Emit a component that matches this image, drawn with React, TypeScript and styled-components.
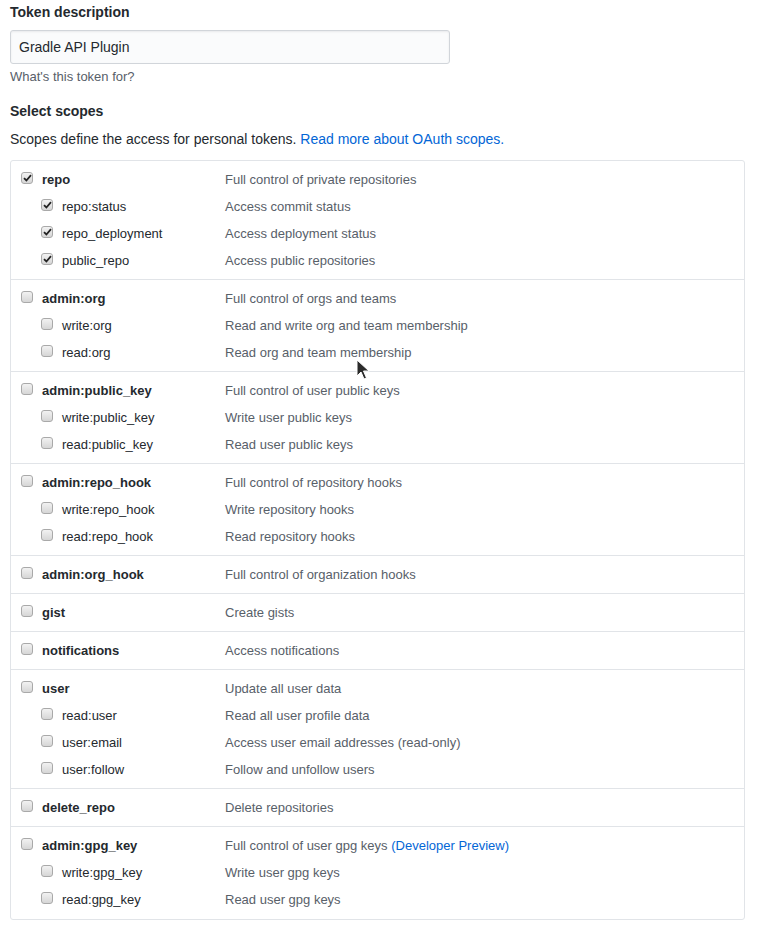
import React from "react";
import styled, { createGlobalStyle } from "styled-components";

const Global = createGlobalStyle`
  html, body { margin: 0; padding: 0; background: #fff; }
  body {
    font-family: "Liberation Sans", Arial, Helvetica, sans-serif;
    color: #24292e;
    font-size: 14px;
    line-height: 1.5;
  }
`;

const Page = styled.div`
  position: relative;
  padding: 2px 20px 10px 10px;
`;

const Label = styled.div`
  font-weight: bold;
  font-size: 14px;
  line-height: 21px;
`;

const Input = styled.input`
  display: block;
  box-sizing: border-box;
  width: 440px;
  height: 34px;
  margin-top: 7px;
  padding: 6px 8px;
  font-family: inherit;
  font-size: 14px;
  color: #24292e;
  background: #fafbfc;
  border: 1px solid #d1d5da;
  border-radius: 3px;
  box-shadow: inset 0 1px 2px rgba(27, 31, 35, 0.075);
  outline: none;
`;

const Note = styled.div`
  margin-top: 3px;
  font-size: 13px;
  line-height: 20px;
  color: #586069;
`;

const SectionTitle = styled(Label)`
  margin-top: 14px;
`;

const Lead = styled.p`
  margin: 7px 0 0;
  font-size: 14px;
  line-height: 21px;
`;

const Link = styled.a`
  color: #0366d6;
  text-decoration: none;
`;

const Table = styled.div`
  margin-top: 10px;
  padding-bottom: 1px;
  border: 1px solid #e1e4e8;
  border-radius: 3px;
`;

const Group = styled.div`
  padding: 5px 0;
  border-top: 1px solid #e1e4e8;
  &:first-child { border-top: none; }
`;

const Row = styled.div`
  display: grid;
  grid-template-columns: 214px 1fr;
  align-items: center;
  height: 27px;
  font-size: 13px;
`;

const NameCell = styled.div<{ $child?: boolean }>`
  display: flex;
  align-items: center;
  padding-left: ${(p) => (p.$child ? 30 : 10)}px;
  font-weight: ${(p) => (p.$child ? "normal" : "bold")};
  color: #24292e;
`;

const Box = styled.span`
  box-sizing: border-box;
  display: inline-flex;
  align-items: center;
  justify-content: center;
  width: 12px;
  height: 12px;
  margin-right: 9px;
  position: relative;
  top: -2px;
  border: 1px solid #a9a9a9;
  border-radius: 3px;
  background: linear-gradient(#f2f2f2, #d6d6d6);
`;

const Desc = styled.div`
  color: #586069;
`;

const Cursor = styled.svg`
  position: absolute;
  left: 356px;
  top: 359px;
`;

type Scope = { name: string; desc: string; preview?: boolean };
type ScopeGroup = { parent: Scope; children: Scope[]; checked?: boolean };

const groups: ScopeGroup[] = [
  {
    parent: { name: "repo", desc: "Full control of private repositories" },
    checked: true,
    children: [
      { name: "repo:status", desc: "Access commit status" },
      { name: "repo_deployment", desc: "Access deployment status" },
      { name: "public_repo", desc: "Access public repositories" },
    ],
  },
  {
    parent: { name: "admin:org", desc: "Full control of orgs and teams" },
    children: [
      { name: "write:org", desc: "Read and write org and team membership" },
      { name: "read:org", desc: "Read org and team membership" },
    ],
  },
  {
    parent: { name: "admin:public_key", desc: "Full control of user public keys" },
    children: [
      { name: "write:public_key", desc: "Write user public keys" },
      { name: "read:public_key", desc: "Read user public keys" },
    ],
  },
  {
    parent: { name: "admin:repo_hook", desc: "Full control of repository hooks" },
    children: [
      { name: "write:repo_hook", desc: "Write repository hooks" },
      { name: "read:repo_hook", desc: "Read repository hooks" },
    ],
  },
  { parent: { name: "admin:org_hook", desc: "Full control of organization hooks" }, children: [] },
  { parent: { name: "gist", desc: "Create gists" }, children: [] },
  { parent: { name: "notifications", desc: "Access notifications" }, children: [] },
  {
    parent: { name: "user", desc: "Update all user data" },
    children: [
      { name: "read:user", desc: "Read all user profile data" },
      { name: "user:email", desc: "Access user email addresses (read-only)" },
      { name: "user:follow", desc: "Follow and unfollow users" },
    ],
  },
  { parent: { name: "delete_repo", desc: "Delete repositories" }, children: [] },
  {
    parent: { name: "admin:gpg_key", desc: "Full control of user gpg keys", preview: true },
    children: [
      { name: "write:gpg_key", desc: "Write user gpg keys" },
      { name: "read:gpg_key", desc: "Read user gpg keys" },
    ],
  },
];

function Check({ checked }: { checked?: boolean }) {
  return (
    <Box>
      {checked && (
        <svg width="9" height="8" viewBox="0 0 9 8">
          <path d="M1 4.2 L3.4 6.5 L8 1.2" fill="none" stroke="#222" strokeWidth="1.8" />
        </svg>
      )}
    </Box>
  );
}

function ScopeRow({ scope, child, checked }: { scope: Scope; child?: boolean; checked?: boolean }) {
  return (
    <Row>
      <NameCell $child={child}>
        <Check checked={checked} />
        {scope.name}
      </NameCell>
      <Desc>
        {scope.desc}
        {scope.preview && (
          <>
            {" "}
            <Link href="#">(Developer Preview)</Link>
          </>
        )}
      </Desc>
    </Row>
  );
}

export default function App() {
  return (
    <>
      <Global />
      <Page>
        <Label>Token description</Label>
        <Input defaultValue="Gradle API Plugin" />
        <Note>What's this token for?</Note>
        <SectionTitle>Select scopes</SectionTitle>
        <Lead>
          Scopes define the access for personal tokens.{" "}
          <Link href="#">Read more about OAuth scopes.</Link>
        </Lead>
        <Table>
          {groups.map((g) => (
            <Group key={g.parent.name}>
              <ScopeRow scope={g.parent} checked={g.checked} />
              {g.children.map((c) => (
                <ScopeRow key={c.name} scope={c} child checked={g.checked} />
              ))}
            </Group>
          ))}
        </Table>
        <Cursor width="14" height="22" viewBox="0 0 14 22">
          <path d="M1 1 L1 17 L5 13 L8 20 L10.5 19 L7.5 12 L13 12 Z" fill="#2b2b2b" stroke="#fff" strokeWidth="1" />
        </Cursor>
      </Page>
    </>
  );
}
